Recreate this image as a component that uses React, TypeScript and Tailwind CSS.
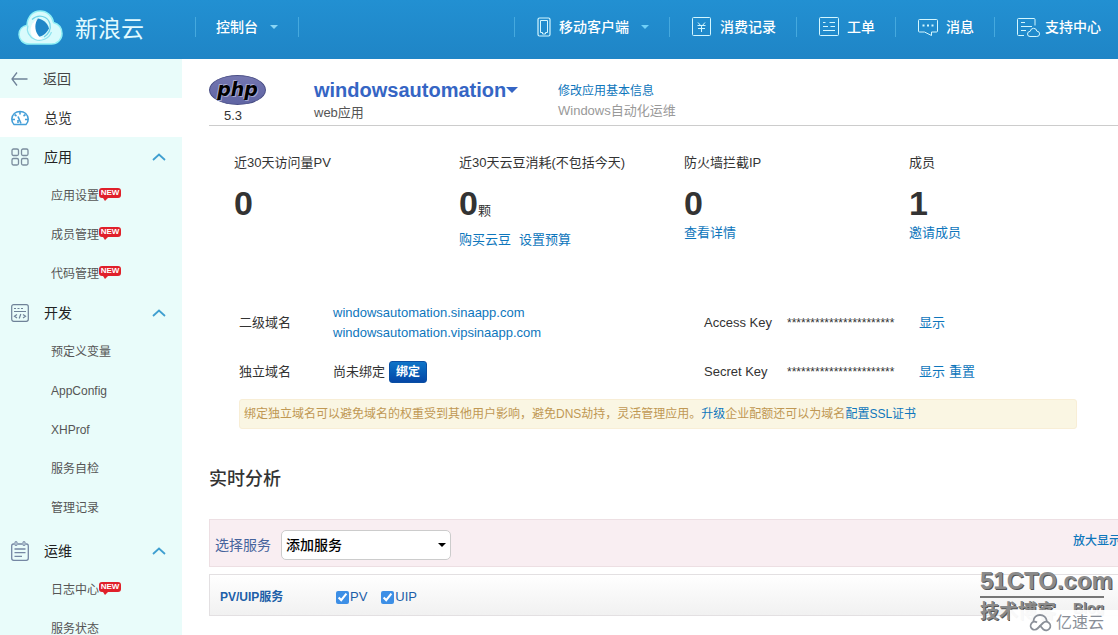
import type { ReactNode } from "react";

type SubItem = { label: string; isNew?: boolean };
type MenuGroup = { title: string; icon: ReactNode; className?: string; items: SubItem[] };

function CloudLogo() {
  return (
    <svg width="45" height="35" viewBox="0 0 45 35" fill="none">
      <path
        d="M11 34C5 34 1 29.5 1 24.5C1 19.5 4.500 16 9 15.2C9.5 6.5 15 1 22 1C29 1 34.5 6 35.5 12.5C40.5 14 44 18 44 23.5C44 29.5 39.5 34 33.5 34Z"
        fill="#d9fbfc"
        stroke="#8feff5"
        strokeWidth="1.5"
      />
      <path d="M20 8.5C25.500 9.500 29.500 13 31 18.500C28.500 23.500 24.500 26.500 19 27C15.500 24.500 13.500 21 13.500 17.500C14.500 13.500 16.500 10.500 20 8.500Z" fill="#1f86c8" />
      <path d="M20 8.500C16.500 13 16.500 20 20 25C21.500 27.500 24 29 27 29.500C21.500 32 16 29.500 13.500 25C11 19.500 13.500 11.500 20 8.500Z" fill="#fff" />
      <path d="M14 9.500C20.500 3.500 30 6 32 14C33 19 30.500 24 26 27" stroke="#6fd3e8" strokeWidth="1.200" />
      <path d="M10 15.500C8 21 11 27 17 29.500C23 32 31 29 33.500 22" stroke="#8fe3ee" strokeWidth="1.200" />
    </svg>
  );
}

function PhoneIcon() {
  return (
    <svg width="14" height="20" viewBox="0 0 14 20" fill="none" stroke="#d4f7ff" strokeWidth="1.2">
      <rect x="1" y="1" width="12" height="18" rx="1.5" />
      <path d="M3.500 3.500h7v12h-2v1.500h-3v-1.500h-2z" strokeWidth="1" />
    </svg>
  );
}

function YuanIcon() {
  return (
    <svg width="20" height="20" viewBox="0 0 20 20" fill="none" stroke="#d4f7ff" strokeWidth="1">
      <rect x="0.5" y="0.5" width="18" height="18" rx="1" />
      <path d="M6 5.500L9.500 9.500L13 5.500M9.500 9.500V15M5.500 8.500h8M6 11.500h7" />
    </svg>
  );
}

function TicketIcon() {
  return (
    <svg width="20" height="20" viewBox="0 0 20 20" fill="none" stroke="#d4f7ff" strokeWidth="1">
      <rect x="0.5" y="0.5" width="19" height="18" rx="1" />
      <path d="M4 5.500h2.500M10.500 5.500h5.500M4 9.500h5M11.500 9.500h4.500M4 13.500h12" />
    </svg>
  );
}

function MessageIcon() {
  return (
    <svg width="20" height="20" viewBox="0 0 20 20" fill="none" stroke="#d4f7ff" strokeWidth="1">
      <path d="M1.500 2.500h17q1 0 1 1v10.500q0 1-1 1h-5v3.500l-7-3.500h-5q-1 0-1-1v-10.500q0-1 1-1z" />
      <path d="M4.500 8.500h2M9 8.500h2M13.500 8.500h2" strokeWidth="2" />
    </svg>
  );
}

function SupportIcon() {
  return (
    <svg width="20" height="20" viewBox="0 0 20 20" fill="none" stroke="#d4f7ff" strokeWidth="1" className="overflow-visible">
      <path d="M7 18.500H1.500q-1 0-1-1v-15q0-1 1-1h15.500q1 0 1 1v6" />
      <path d="M4 5.500h4M4 9.500h11M4 13.500h5" />
      <path d="M13 19.500q-2.500 0-2.500-2.500t2.700-2.700q.6-3 3.400-3t3.200 2.800q2.800.2 2.800 2.800t-2.800 2.600z" />
    </svg>
  );
}

function Caret({ className }: { className: string }) {
  return (
    <svg width="8" height="4" viewBox="0 0 8 4" className={className}>
      <path d="M0 0h8L4 4z" fill="currentColor" />
    </svg>
  );
}

function ArrowLeftIcon() {
  return (
    <svg width="18" height="16" viewBox="0 0 18 16" fill="none" stroke="#6f8298" strokeWidth="1.3">
      <path d="M6 1.500L1 8l5 6.500M1 8h15.500" />
    </svg>
  );
}

function GaugeIcon() {
  return (
    <svg width="18" height="18" viewBox="0 0 18 18" fill="none" stroke="#459fd8" strokeWidth="1.6">
      <path d="M3 15.500C1.300 14 .8 12 .8 10C1.200 5.500 4.500 2.500 9 2.500S16.800 5.500 17.200 10C17.200 12 16.700 14 15 15.500z" />
      <path d="M9 2.500v3M3.500 5.500l2 1.500M14.500 5.500l-2 1.500M1 10.500h3M14 10.500h3M7 7.500l3 7M7 11v3" />
    </svg>
  );
}

function GridIcon() {
  return (
    <svg width="18" height="18" viewBox="0 0 18 18" fill="none" stroke="#7b8d9e" strokeWidth="1.3">
      <rect x="1" y="1" width="6.5" height="6.5" rx="1.5" />
      <rect x="10.5" y="1" width="6.5" height="6.5" rx="1.5" />
      <rect x="1" y="10.5" width="6.5" height="6.5" rx="1.5" />
      <rect x="10.5" y="10.5" width="6.5" height="6.5" rx="1.5" />
    </svg>
  );
}

function CodeIcon() {
  return (
    <svg width="18" height="18" viewBox="0 0 18 18" fill="none" stroke="#6f8298" strokeWidth="1.2">
      <rect x="0.7" y="0.7" width="16.6" height="16.6" rx="2" />
      <path d="M3 4.500h2M6.500 4.500h2M10 4.500h2M3 7.500h12" />
      <path d="M6 10.500l-2.500 1.800L6 14M12 10.500l2.500 1.800L12 14M9.800 10l-1.600 4.500" />
    </svg>
  );
}

function NotepadIcon() {
  return (
    <svg width="18" height="20" viewBox="0 0 18 20" fill="none" stroke="#7587a3" strokeWidth="1.3">
      <path d="M3.500 3H2.500Q.7 3 .7 5v12.300q0 2 2 2h12.600q2 0 2-2V5q0-2-1.800-2h-1M6.500 3h5" />
      <path d="M4 .8h2v3.500h-2zM12 .8h2v3.500h-2z" strokeWidth="1" />
      <path d="M3.500 8h11M3.500 11.700h11M3.500 15.400h7.500" />
    </svg>
  );
}

function ChevronUp() {
  return (
    <svg width="14" height="8" viewBox="0 0 14 8" fill="none" stroke="#3f9fd0" strokeWidth="1.8">
      <path d="M1 7l6-5.500L13 7" />
    </svg>
  );
}

function PhpLogo() {
  return (
    <div className="flex h-[30px] w-[57px] items-center justify-center rounded-[50%] border border-[#4a4f86] bg-gradient-to-b from-[#7476b0] to-[#5f64a3]">
      <span className="pb-[2px] font-['DejaVu_Sans','Liberation_Sans',sans-serif] text-[19px] font-bold italic leading-none text-black [text-shadow:-1px_-1px_0_#a5a7d0,1px_1px_0_#a5a7d0]">
        php
      </span>
    </div>
  );
}

const topNav = [
  { label: "移动客户端", icon: <PhoneIcon />, dropdown: true },
  { label: "消费记录", icon: <YuanIcon /> },
  { label: "工单", icon: <TicketIcon /> },
  { label: "消息", icon: <MessageIcon /> },
  { label: "支持中心", icon: <SupportIcon /> },
];

const groups: MenuGroup[] = [
  {
    title: "应用",
    icon: <GridIcon />,
    items: [
      { label: "应用设置", isNew: true },
      { label: "成员管理", isNew: true },
      { label: "代码管理", isNew: true },
    ],
  },
  {
    title: "开发",
    icon: <CodeIcon />,
    items: [
      { label: "预定义变量" },
      { label: "AppConfig" },
      { label: "XHProf" },
      { label: "服务自检" },
      { label: "管理记录" },
    ],
  },
  {
    title: "运维",
    icon: <NotepadIcon />,
    className: "mt-1",
    items: [{ label: "日志中心", isNew: true }, { label: "服务状态" }],
  },
];

const stats = [
  { label: "近30天访问量PV", value: "0", links: [] },
  { label: "近30天云豆消耗(不包括今天)", value: "0", unit: "颗", links: ["购买云豆", "设置预算"] },
  { label: "防火墙拦截IP", value: "0", links: ["查看详情"] },
  { label: "成员", value: "1", links: ["邀请成员"] },
];

function TopBar() {
  return (
    <header className="flex h-[59px] shrink-0 items-center bg-gradient-to-b from-[#2290d2] to-[#1f85c6] pb-[5px] pl-[18px] pr-[17px] text-sm font-medium text-white">
      <a href="#" className="flex items-center gap-3">
        <CloudLogo />
        <span className="pt-1 text-[23px] font-normal leading-8 text-[#e2fbff]">新浪云</span>
      </a>
      <div className="ml-[51px] flex h-5 items-center border-x border-[#45a9de] px-5">
        <button type="button" className="flex items-center gap-3">
          控制台
          <Caret className="text-[#8ad6f5]" />
        </button>
      </div>
      <nav className="ml-auto flex">
        {topNav.map((item) => (
          <a
            key={item.label}
            href="#"
            className="flex h-5 items-center gap-2 whitespace-nowrap border-l border-[#45a9de] pl-[22px] pr-5 last:pr-0"
          >
            {item.icon}
            {item.label}
            {item.dropdown && <Caret className="ml-1 text-[#6fd0f8]" />}
          </a>
        ))}
      </nav>
    </header>
  );
}

function NewBadge() {
  return (
    <span className="absolute left-full top-[2px] flex h-[10px] w-[22px] items-center justify-center rounded-[3px] bg-[#e0202a] text-[8px] font-bold leading-none text-white">
      NEW
      <svg width="6" height="3" viewBox="0 0 6 3" className="absolute left-1 top-full">
        <path d="M0 0h5L2 3z" fill="#e0202a" />
      </svg>
    </span>
  );
}

function Sidebar() {
  return (
    <aside className="w-[182px] shrink-0 bg-[#e9fcfa] text-sm text-[#333]">
      <a href="#" className="flex h-[39px] items-center gap-[14px] pl-[11px] text-[#444]">
        <ArrowLeftIcon />
        返回
      </a>
      <a href="#" className="flex h-[39px] items-center gap-[15px] bg-white pl-[11px]">
        <GaugeIcon />
        总览
      </a>
      {groups.map((group) => (
        <section key={group.title} className={group.className}>
          <button type="button" className="flex h-[39px] w-full items-center gap-[15px] pl-[11px] pr-4 text-[#222]">
            {group.icon}
            {group.title}
            <span className="ml-auto">
              <ChevronUp />
            </span>
          </button>
          <ul>
            {group.items.map((item) => (
              <li key={item.label} className="flex h-[39px] items-center pl-[51px] text-xs text-[#555]">
                <a href="#" className="relative leading-5">
                  {item.label}
                  {item.isNew && <NewBadge />}
                </a>
              </li>
            ))}
          </ul>
        </section>
      ))}
    </aside>
  );
}

function AppHeader() {
  return (
    <div className="flex h-[67px] border-b border-[#ccc] pt-4">
      <div className="w-[105px]">
        <PhpLogo />
        <p className="pl-[15px] text-[13px] leading-[22px]">5.3</p>
      </div>
      <div className="w-[244px] pt-[3px]">
        <button type="button" className="flex items-center text-xl font-bold leading-6 text-[#3565c4]">
          windowsautomation
          <svg width="12" height="6" viewBox="0 0 12 6">
            <path d="M0 0h12L6 6z" fill="currentColor" />
          </svg>
        </button>
        <p className="text-[13px] leading-[22px] text-[#555]">web应用</p>
      </div>
      <div className="pt-[6px] leading-5">
        <a href="#" className="block text-xs leading-5 text-[#0e76bc]">
          修改应用基本信息
        </a>
        <p className="text-[13px] text-[#999]">Windows自动化运维</p>
      </div>
    </div>
  );
}

function Stats() {
  return (
    <div className="-mr-4 grid h-[170px] grid-cols-4 pl-[25px] pt-[27px] text-[13px]">
      {stats.map((stat) => (
        <div key={stat.label}>
          <p className="leading-5">{stat.label}</p>
          <p className="mt-[10px] flex h-10 items-baseline">
            <span className="text-[34px] font-bold leading-10">{stat.value}</span>
            {stat.unit}
          </p>
          <p className={stat.unit ? "mt-[7px] flex gap-2 leading-5" : "flex gap-2 leading-5"}>
            {stat.links.map((link) => (
              <a key={link} href="#" className="text-[#0e76bc]">
                {link}
              </a>
            ))}
          </p>
        </div>
      ))}
    </div>
  );
}

function KeyInfo({ name, links }: { name: string; links: string[] }) {
  return (
    <>
      <span className="w-[83px]">{name}</span>
      <span className="w-[132px] text-xs">***********************</span>
      <span className="flex gap-1">
        {links.map((link) => (
          <a key={link} href="#" className="text-[#0e76bc]">
            {link}
          </a>
        ))}
      </span>
    </>
  );
}

function DomainInfo() {
  return (
    <div className="pl-[30px] text-[13px] leading-5">
      <div className="flex h-[54px] items-center">
        <span className="w-[94px]">二级域名</span>
        <span className="flex w-[371px] flex-col items-start text-[#0e76bc]">
          <a href="#">windowsautomation.sinaapp.com</a>
          <a href="#">windowsautomation.vipsinaapp.com</a>
        </span>
        <KeyInfo name="Access Key" links={["显示"]} />
      </div>
      <div className="flex h-11 items-center">
        <span className="w-[94px]">独立域名</span>
        <span className="flex w-[371px] items-center gap-1">
          尚未绑定
          <button
            type="button"
            className="h-[22px] rounded-[3px] border border-[#0a4fa3] bg-gradient-to-b from-[#0f74c8] to-[#0647a6] px-[6px] text-xs font-bold leading-5 text-white"
          >
            绑定
          </button>
        </span>
        <KeyInfo name="Secret Key" links={["显示", "重置"]} />
      </div>
      <div className="mr-[41px] mt-[5px] rounded-[3px] border border-[#f8eed6] bg-[#faf6e3] p-1 text-xs leading-5 text-[#c09853]">
        绑定独立域名可以避免域名的权重受到其他用户影响，避免DNS劫持，灵活管理应用。
        <a href="#" className="text-[#0e76bc]">升级</a>
        企业配额还可以为域名
        <a href="#" className="text-[#0e76bc]">配置SSL证书</a>
      </div>
    </div>
  );
}

function Analysis() {
  return (
    <section>
      <h2 className="mt-[38px] text-lg font-medium leading-6">实时分析</h2>
      <div className="-mr-4 mt-7 flex h-12 items-center border border-[#eddfe3] bg-[#f9eef2] pl-[5px] pt-1">
        <label htmlFor="service" className="text-sm text-[#46639c]">
          选择服务
        </label>
        <div className="relative ml-[10px]">
          <select
            id="service"
            className="h-[30px] w-[170px] appearance-none rounded-[5px] border border-[#ccc] bg-white px-1 text-sm font-medium text-black"
          >
            <option>添加服务</option>
          </select>
          <Caret className="pointer-events-none absolute right-[5px] top-[13px] text-black" />
        </div>
        <a href="#" className="ml-auto pb-2 pr-3 text-xs font-medium text-[#0e76bc]">
          放大显示
        </a>
      </div>
      <div className="-mr-4 mt-[7px] flex h-[42px] items-center border border-[#e3e0e2] bg-gradient-to-b from-white to-[#f1f1f1] pl-[10px] pt-1 text-[13px] text-[#1d5fa8]">
        <span className="w-[116px] text-xs font-bold">PV/UIP服务</span>
        <label className="mr-[14px] flex items-center gap-px">
          <input type="checkbox" defaultChecked className="size-[13px] accent-[#3d8fe6]" />
          PV
        </label>
        <label className="flex items-center gap-px">
          <input type="checkbox" defaultChecked className="size-[13px] accent-[#3d8fe6]" />
          UIP
        </label>
      </div>
    </section>
  );
}

function Watermark() {
  return (
    <div className="pointer-events-none absolute bottom-0 right-0 w-[138px] text-[#8b8b8b]">
      <p className="mr-[14px] whitespace-nowrap border-b-2 border-[#777] text-2xl font-bold leading-[30px] [text-shadow:1px_1px_0_#555]">
        51CTO.com
      </p>
      <p className="mr-[14px] flex h-[37px] justify-between text-[19px] font-bold leading-7">
        <span className="[text-shadow:1px_1px_0_#555]">技术博客</span>
        <span className="text-sm leading-5 [text-shadow:1px_1px_0_#555]">Blog</span>
      </p>
      <div className="absolute bottom-0 right-0 flex h-[25px] w-[108px] items-center gap-[3px] bg-white/95 pl-[18px] text-base leading-6 text-[#8a8f98]">
        <svg width="25" height="18" viewBox="0 0 25 18" fill="none" stroke="#8a8f98" strokeWidth="1.8">
          <path d="M9 8.500A4 4 0 1 0 9.500 14.500L15 9A4.300 4.300 0 1 1 15.500 15.500L11.500 11" />
          <path d="M5.500 7C5.500 3.500 8.500 1 12 1S18.500 3.500 18.800 7" />
        </svg>
        亿速云
      </div>
    </div>
  );
}

export default function App() {
  return (
    <div className="relative flex h-screen flex-col overflow-hidden bg-white font-['Liberation_Sans','Noto_Sans_CJK_SC',sans-serif] text-[#333]">
      <TopBar />
      <div className="flex min-h-0 flex-1">
        <Sidebar />
        <main className="min-w-0 flex-1 overflow-hidden pl-[27px]">
          <AppHeader />
          <Stats />
          <DomainInfo />
          <Analysis />
        </main>
      </div>
      <Watermark />
    </div>
  );
}
